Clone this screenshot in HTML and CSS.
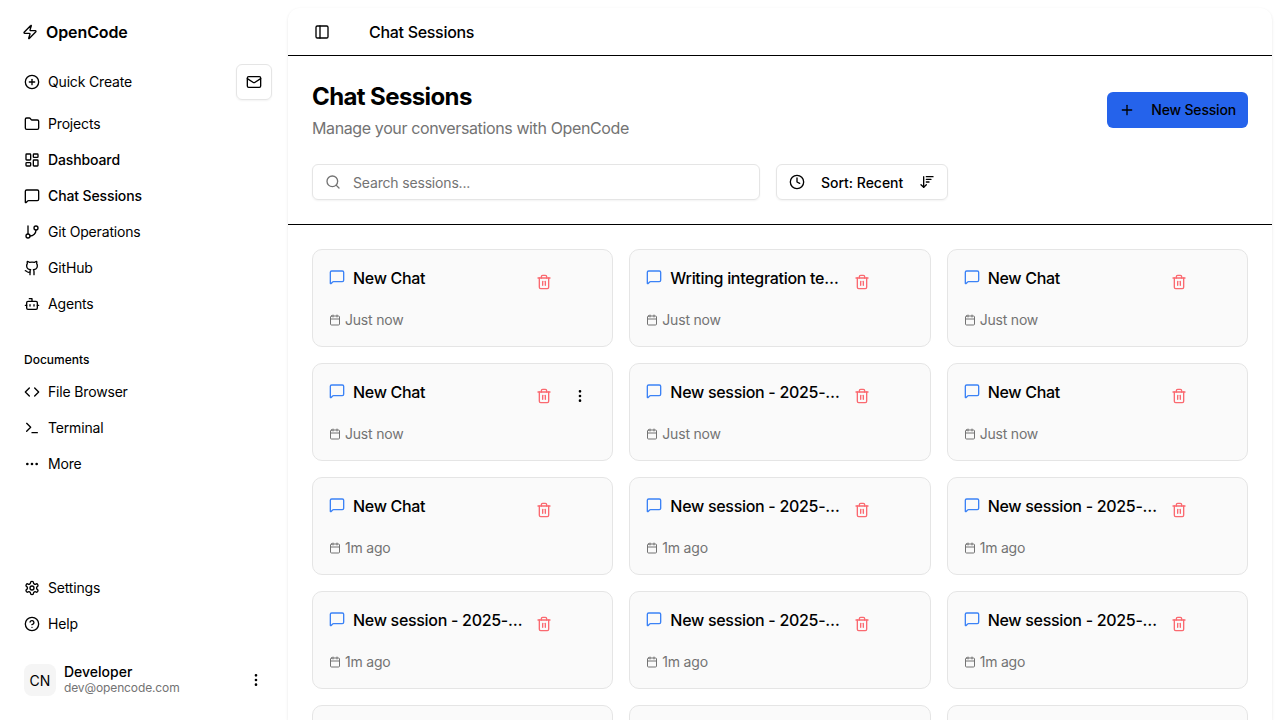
FILE: index.html
```html
<!DOCTYPE html>
<html lang="en">
<head>
    <meta charset="UTF-8">
    <meta name="viewport" content="width=device-width, initial-scale=1.0">
    <title>Chat Sessions - OpenCode</title>
    <link rel="stylesheet" href="styles.css">
</head>
<body>
    <svg class="sprite" xmlns="http://www.w3.org/2000/svg">
        <symbol id="i-zap" viewBox="0 0 24 24"><path d="M4 14a1 1 0 0 1-.78-1.63l9.9-10.2a.5.5 0 0 1 .86.46l-1.92 6.02A1 1 0 0 0 13 10h7a1 1 0 0 1 .78 1.63l-9.9 10.2a.5.5 0 0 1-.86-.46l1.92-6.02A1 1 0 0 0 11 14z"/></symbol>
        <symbol id="i-plus-circle" viewBox="0 0 24 24"><circle cx="12" cy="12" r="10"/><path d="M8 12h8"/><path d="M12 8v8"/></symbol>
        <symbol id="i-mail" viewBox="0 0 24 24"><rect x="2" y="4" width="20" height="16" rx="2"/><path d="m22 7-8.97 5.7a1.94 1.94 0 0 1-2.06 0L2 7"/></symbol>
        <symbol id="i-folder" viewBox="0 0 24 24"><path d="M20 20a2 2 0 0 0 2-2V8a2 2 0 0 0-2-2h-7.9a2 2 0 0 1-1.69-.9L9.6 3.9A2 2 0 0 0 7.93 3H4a2 2 0 0 0-2 2v13a2 2 0 0 0 2 2Z"/></symbol>
        <symbol id="i-dashboard" viewBox="0 0 24 24"><rect x="3" y="3" width="7" height="9" rx="1"/><rect x="14" y="3" width="7" height="5" rx="1"/><rect x="14" y="12" width="7" height="9" rx="1"/><rect x="3" y="16" width="7" height="5" rx="1"/></symbol>
        <symbol id="i-message" viewBox="0 0 24 24"><path d="M22 17a2 2 0 0 1-2 2H6.828a2 2 0 0 0-1.414.586l-2.202 2.202A.71.71 0 0 1 2 21.286V5a2 2 0 0 1 2-2h16a2 2 0 0 1 2 2z"/></symbol>
        <symbol id="i-git" viewBox="0 0 24 24"><path d="M6 3v12"/><circle cx="18" cy="6" r="3"/><circle cx="6" cy="18" r="3"/><path d="M18 9a9 9 0 0 1-9 9"/></symbol>
        <symbol id="i-github" viewBox="0 0 24 24"><path d="M15 22v-4a4.8 4.8 0 0 0-1-3.5c3 0 6-2 6-5.5.08-1.25-.27-2.48-1-3.5.28-1.15.28-2.35 0-3.5 0 0-1 0-3 1.5-2.64-.5-5.36-.5-8 0C6 2 5 2 5 2c-.3 1.15-.3 2.35 0 3.5A5.403 5.403 0 0 0 4 9c0 3.5 3 5.5 6 5.5-.39.49-.68 1.05-.85 1.65-.17.6-.22 1.23-.15 1.85v4"/><path d="M9 18c-4.51 2-5-2-7-2"/></symbol>
        <symbol id="i-bot" viewBox="0 0 24 24"><path d="M12 8V4H8"/><rect x="4" y="8" width="16" height="12" rx="2"/><path d="M2 14h2"/><path d="M20 14h2"/><path d="M15 13v2"/><path d="M9 13v2"/></symbol>
        <symbol id="i-code" viewBox="0 0 24 24"><path d="m16 18 6-6-6-6"/><path d="m8 6-6 6 6 6"/></symbol>
        <symbol id="i-terminal" viewBox="0 0 24 24"><path d="m4 17 6-6-6-6"/><path d="M12 19h8"/></symbol>
        <symbol id="i-more-h" viewBox="0 0 24 24"><circle cx="12" cy="12" r="1"/><circle cx="19" cy="12" r="1"/><circle cx="5" cy="12" r="1"/></symbol>
        <symbol id="i-more-v" viewBox="0 0 24 24"><circle cx="12" cy="12" r="1"/><circle cx="12" cy="5" r="1"/><circle cx="12" cy="19" r="1"/></symbol>
        <symbol id="i-settings" viewBox="0 0 24 24"><path d="M12.22 2h-.44a2 2 0 0 0-2 2v.18a2 2 0 0 1-1 1.73l-.43.25a2 2 0 0 1-2 0l-.15-.08a2 2 0 0 0-2.73.73l-.22.38a2 2 0 0 0 .73 2.73l.15.1a2 2 0 0 1 1 1.72v.51a2 2 0 0 1-1 1.74l-.15.09a2 2 0 0 0-.73 2.73l.22.38a2 2 0 0 0 2.73.73l.15-.08a2 2 0 0 1 2 0l.43.25a2 2 0 0 1 1 1.73V20a2 2 0 0 0 2 2h.44a2 2 0 0 0 2-2v-.18a2 2 0 0 1 1-1.73l.43-.25a2 2 0 0 1 2 0l.15.08a2 2 0 0 0 2.73-.73l.22-.39a2 2 0 0 0-.73-2.73l-.15-.08a2 2 0 0 1-1-1.74v-.5a2 2 0 0 1 1-1.74l.15-.09a2 2 0 0 0 .73-2.73l-.22-.38a2 2 0 0 0-2.73-.73l-.15.08a2 2 0 0 1-2 0l-.43-.25a2 2 0 0 1-1-1.73V4a2 2 0 0 0-2-2z"/><circle cx="12" cy="12" r="3"/></symbol>
        <symbol id="i-help" viewBox="0 0 24 24"><circle cx="12" cy="12" r="10"/><path d="M9.09 9a3 3 0 0 1 5.83 1c0 2-3 3-3 3"/><path d="M12 17h.01"/></symbol>
        <symbol id="i-panel" viewBox="0 0 24 24"><rect x="3" y="3" width="18" height="18" rx="2"/><path d="M9 3v18"/></symbol>
        <symbol id="i-search" viewBox="0 0 24 24"><path d="m21 21-4.34-4.34"/><circle cx="11" cy="11" r="8"/></symbol>
        <symbol id="i-clock" viewBox="0 0 24 24"><circle cx="12" cy="12" r="10"/><path d="M12 6v6l4 2"/></symbol>
        <symbol id="i-sort" viewBox="0 0 24 24"><path d="m3 16 4 4 4-4"/><path d="M7 20V4"/><path d="M11 4h10"/><path d="M11 8h7"/><path d="M11 12h4"/></symbol>
        <symbol id="i-plus" viewBox="0 0 24 24"><path d="M5 12h14"/><path d="M12 5v14"/></symbol>
        <symbol id="i-trash" viewBox="0 0 24 24"><path d="M3 6h18"/><path d="M19 6v14c0 1-1 2-2 2H7c-1 0-2-1-2-2V6"/><path d="M8 6V4c0-1 1-2 2-2h4c1 0 2 1 2 2v2"/><path d="M10 11v6"/><path d="M14 11v6"/></symbol>
        <symbol id="i-calendar" viewBox="0 0 24 24"><path d="M8 2v4"/><path d="M16 2v4"/><rect x="3" y="4" width="18" height="18" rx="2"/><path d="M3 10h18"/></symbol>
    </svg>

    <div class="app">
        <aside class="sidebar">
            <div class="brand">
                <svg class="icon"><use href="#i-zap"/></svg>
                <span>OpenCode</span>
            </div>

            <div class="quick-row">
                <a class="nav-item quick-link"><svg class="icon"><use href="#i-plus-circle"/></svg>Quick Create</a>
                <button class="mail-btn"><svg class="icon"><use href="#i-mail"/></svg></button>
            </div>

            <nav class="nav-list">
                <a class="nav-item"><svg class="icon"><use href="#i-folder"/></svg>Projects</a>
                <a class="nav-item strong"><svg class="icon"><use href="#i-dashboard"/></svg>Dashboard</a>
                <a class="nav-item strong"><svg class="icon"><use href="#i-message"/></svg>Chat Sessions</a>
                <a class="nav-item"><svg class="icon"><use href="#i-git"/></svg>Git Operations</a>
                <a class="nav-item"><svg class="icon"><use href="#i-github"/></svg>GitHub</a>
                <a class="nav-item"><svg class="icon"><use href="#i-bot"/></svg>Agents</a>
            </nav>

            <div class="nav-label">Documents</div>
            <nav class="nav-list">
                <a class="nav-item"><svg class="icon"><use href="#i-code"/></svg>File Browser</a>
                <a class="nav-item"><svg class="icon"><use href="#i-terminal"/></svg>Terminal</a>
                <a class="nav-item"><svg class="icon"><use href="#i-more-h"/></svg>More</a>
            </nav>

            <nav class="nav-list nav-bottom">
                <a class="nav-item"><svg class="icon"><use href="#i-settings"/></svg>Settings</a>
                <a class="nav-item"><svg class="icon"><use href="#i-help"/></svg>Help</a>
            </nav>

            <div class="user">
                <div class="avatar">CN</div>
                <div class="user-info">
                    <div class="user-name">Developer</div>
                    <div class="user-mail">dev@opencode.com</div>
                </div>
                <svg class="icon"><use href="#i-more-v"/></svg>
            </div>
        </aside>

        <main class="main">
            <header class="topbar">
                <button class="panel-btn"><svg class="icon"><use href="#i-panel"/></svg></button>
                <span class="topbar-title">Chat Sessions</span>
            </header>

            <section class="page-head">
                <div class="title-row">
                    <div>
                        <h1>Chat Sessions</h1>
                        <p>Manage your conversations with OpenCode</p>
                    </div>
                    <button class="new-btn"><svg class="icon"><use href="#i-plus"/></svg>New Session</button>
                </div>
                <div class="filter-row">
                    <label class="search">
                        <svg class="icon"><use href="#i-search"/></svg>
                        <input type="text" placeholder="Search sessions...">
                    </label>
                    <button class="sort-btn">
                        <svg class="icon"><use href="#i-clock"/></svg>
                        Sort: Recent
                        <svg class="icon"><use href="#i-sort"/></svg>
                    </button>
                </div>
            </section>

            <section class="grid">
                <article class="card">
                    <div class="card-top">
                        <svg class="icon chat-icon"><use href="#i-message"/></svg>
                        <h3>New Chat</h3>
                        <button class="card-btn delete"><svg class="icon"><use href="#i-trash"/></svg></button>
                        <button class="card-btn more"><svg class="icon"><use href="#i-more-v"/></svg></button>
                    </div>
                    <div class="card-date"><svg class="icon-sm"><use href="#i-calendar"/></svg>Just now</div>
                </article>
                <article class="card">
                    <div class="card-top">
                        <svg class="icon chat-icon"><use href="#i-message"/></svg>
                        <h3>Writing integration tests</h3>
                        <button class="card-btn delete"><svg class="icon"><use href="#i-trash"/></svg></button>
                        <button class="card-btn more"><svg class="icon"><use href="#i-more-v"/></svg></button>
                    </div>
                    <div class="card-date"><svg class="icon-sm"><use href="#i-calendar"/></svg>Just now</div>
                </article>
                <article class="card">
                    <div class="card-top">
                        <svg class="icon chat-icon"><use href="#i-message"/></svg>
                        <h3>New Chat</h3>
                        <button class="card-btn delete"><svg class="icon"><use href="#i-trash"/></svg></button>
                        <button class="card-btn more"><svg class="icon"><use href="#i-more-v"/></svg></button>
                    </div>
                    <div class="card-date"><svg class="icon-sm"><use href="#i-calendar"/></svg>Just now</div>
                </article>

                <article class="card hovered">
                    <div class="card-top">
                        <svg class="icon chat-icon"><use href="#i-message"/></svg>
                        <h3>New Chat</h3>
                        <button class="card-btn delete"><svg class="icon"><use href="#i-trash"/></svg></button>
                        <button class="card-btn more"><svg class="icon"><use href="#i-more-v"/></svg></button>
                    </div>
                    <div class="card-date"><svg class="icon-sm"><use href="#i-calendar"/></svg>Just now</div>
                </article>
                <article class="card">
                    <div class="card-top">
                        <svg class="icon chat-icon"><use href="#i-message"/></svg>
                        <h3>New session - 2025-06-14</h3>
                        <button class="card-btn delete"><svg class="icon"><use href="#i-trash"/></svg></button>
                        <button class="card-btn more"><svg class="icon"><use href="#i-more-v"/></svg></button>
                    </div>
                    <div class="card-date"><svg class="icon-sm"><use href="#i-calendar"/></svg>Just now</div>
                </article>
                <article class="card">
                    <div class="card-top">
                        <svg class="icon chat-icon"><use href="#i-message"/></svg>
                        <h3>New Chat</h3>
                        <button class="card-btn delete"><svg class="icon"><use href="#i-trash"/></svg></button>
                        <button class="card-btn more"><svg class="icon"><use href="#i-more-v"/></svg></button>
                    </div>
                    <div class="card-date"><svg class="icon-sm"><use href="#i-calendar"/></svg>Just now</div>
                </article>

                <article class="card">
                    <div class="card-top">
                        <svg class="icon chat-icon"><use href="#i-message"/></svg>
                        <h3>New Chat</h3>
                        <button class="card-btn delete"><svg class="icon"><use href="#i-trash"/></svg></button>
                        <button class="card-btn more"><svg class="icon"><use href="#i-more-v"/></svg></button>
                    </div>
                    <div class="card-date"><svg class="icon-sm"><use href="#i-calendar"/></svg>1m ago</div>
                </article>
                <article class="card">
                    <div class="card-top">
                        <svg class="icon chat-icon"><use href="#i-message"/></svg>
                        <h3>New session - 2025-06-14</h3>
                        <button class="card-btn delete"><svg class="icon"><use href="#i-trash"/></svg></button>
                        <button class="card-btn more"><svg class="icon"><use href="#i-more-v"/></svg></button>
                    </div>
                    <div class="card-date"><svg class="icon-sm"><use href="#i-calendar"/></svg>1m ago</div>
                </article>
                <article class="card">
                    <div class="card-top">
                        <svg class="icon chat-icon"><use href="#i-message"/></svg>
                        <h3>New session - 2025-06-14</h3>
                        <button class="card-btn delete"><svg class="icon"><use href="#i-trash"/></svg></button>
                        <button class="card-btn more"><svg class="icon"><use href="#i-more-v"/></svg></button>
                    </div>
                    <div class="card-date"><svg class="icon-sm"><use href="#i-calendar"/></svg>1m ago</div>
                </article>

                <article class="card">
                    <div class="card-top">
                        <svg class="icon chat-icon"><use href="#i-message"/></svg>
                        <h3>New session - 2025-06-14</h3>
                        <button class="card-btn delete"><svg class="icon"><use href="#i-trash"/></svg></button>
                        <button class="card-btn more"><svg class="icon"><use href="#i-more-v"/></svg></button>
                    </div>
                    <div class="card-date"><svg class="icon-sm"><use href="#i-calendar"/></svg>1m ago</div>
                </article>
                <article class="card">
                    <div class="card-top">
                        <svg class="icon chat-icon"><use href="#i-message"/></svg>
                        <h3>New session - 2025-06-14</h3>
                        <button class="card-btn delete"><svg class="icon"><use href="#i-trash"/></svg></button>
                        <button class="card-btn more"><svg class="icon"><use href="#i-more-v"/></svg></button>
                    </div>
                    <div class="card-date"><svg class="icon-sm"><use href="#i-calendar"/></svg>1m ago</div>
                </article>
                <article class="card">
                    <div class="card-top">
                        <svg class="icon chat-icon"><use href="#i-message"/></svg>
                        <h3>New session - 2025-06-14</h3>
                        <button class="card-btn delete"><svg class="icon"><use href="#i-trash"/></svg></button>
                        <button class="card-btn more"><svg class="icon"><use href="#i-more-v"/></svg></button>
                    </div>
                    <div class="card-date"><svg class="icon-sm"><use href="#i-calendar"/></svg>1m ago</div>
                </article>

                <article class="card"></article>
                <article class="card"></article>
                <article class="card"></article>
            </section>
        </main>
    </div>
</body>
</html>
```

FILE: styles.css
```css
:root {
    --text-color: #000;
    --muted-color: #737373;
    --border-color: #e5e5e5;
    --primary-color: #2563eb;
    --card-color: #fafafa;
}

* {
    margin: 0;
    padding: 0;
    box-sizing: border-box;
}

body {
    font-family: 'Inter', 'Liberation Sans', sans-serif;
    background-color: #fff;
    color: var(--text-color);
    height: 100vh;
    overflow: hidden;
}

button {
    font: inherit;
    color: inherit;
    background: none;
    border: none;
}

.sprite {
    display: none;
}

.icon,
.icon-sm {
    flex: none;
    width: 16px;
    height: 16px;
    fill: none;
    stroke: currentColor;
    stroke-width: 2;
    stroke-linecap: round;
    stroke-linejoin: round;
}

.icon-sm {
    width: 12px;
    height: 12px;
}

.app {
    display: flex;
    height: 100vh;
}

/* sidebar */

.sidebar {
    display: flex;
    flex-direction: column;
    flex: none;
    width: 288px;
    height: 720px;
    padding: 16px 16px 24px;
}

.brand {
    display: flex;
    align-items: center;
    gap: 8px;
    height: 32px;
    padding-left: 6px;
    margin-bottom: 16px;
    font-size: 16px;
    font-weight: 600;
    letter-spacing: -0.1px;
}

.quick-row {
    display: flex;
    align-items: center;
    justify-content: space-between;
    height: 36px;
    margin-bottom: 8px;
}

.nav-list {
    display: flex;
    flex-direction: column;
    gap: 4px;
}

.nav-item {
    display: flex;
    align-items: center;
    gap: 8px;
    height: 32px;
    padding: 0 8px;
    font-size: 14px;
    line-height: 20px;
    letter-spacing: -0.17px;
}

.nav-item.strong {
    font-weight: 500;
    letter-spacing: -0.12px;
}

.mail-btn {
    display: flex;
    align-items: center;
    justify-content: center;
    width: 36px;
    height: 36px;
    border: 1px solid var(--border-color);
    border-radius: 6px;
    box-shadow: 0 1px 2px rgba(0, 0, 0, 0.05);
}

.nav-label {
    margin-top: 23px;
    height: 33px;
    padding: 0 8px;
    font-size: 12px;
    font-weight: 500;
    line-height: 33px;
}

.nav-bottom {
    margin-top: auto;
}

.user {
    display: flex;
    align-items: center;
    gap: 8px;
    margin-top: 24px;
    padding: 0 8px;
}

.avatar {
    display: flex;
    align-items: center;
    justify-content: center;
    flex: none;
    width: 32px;
    height: 32px;
    border-radius: 8px;
    background-color: #f5f5f5;
    font-size: 14px;
}

.user-info {
    flex: 1;
    min-width: 0;
}

.user-name {
    font-size: 14px;
    font-weight: 500;
    line-height: 16px;
}

.user-mail {
    font-size: 12px;
    line-height: 16px;
    letter-spacing: -0.12px;
    color: var(--muted-color);
}

/* main panel */

.main {
    flex: 1;
    min-width: 0;
    margin: 8px 8px 0 0;
    border-radius: 12px 12px 0 0;
    background-color: #fff;
    box-shadow: 0 1px 3px rgba(0, 0, 0, 0.1);
}

.topbar {
    display: flex;
    align-items: center;
    gap: 33px;
    height: 48px;
    padding: 0 20px;
    border-bottom: 1px solid #000;
}

.panel-btn {
    display: flex;
    align-items: center;
    justify-content: center;
    width: 28px;
    height: 28px;
}

.topbar-title {
    font-size: 16px;
    font-weight: 500;
    letter-spacing: -0.3px;
}

.page-head {
    padding: 24px;
    border-bottom: 1px solid #000;
}

.title-row {
    display: flex;
    align-items: center;
    justify-content: space-between;
    margin-bottom: 24px;
}

h1 {
    padding-top: 1px;
    font-size: 24px;
    font-weight: 700;
    line-height: 32px;
    letter-spacing: -0.6px;
    margin-bottom: 3px;
}

.title-row p {
    font-size: 16px;
    line-height: 24px;
    letter-spacing: -0.38px;
    color: var(--muted-color);
}

.new-btn {
    display: flex;
    align-items: center;
    gap: 16px;
    height: 36px;
    padding: 0 12px;
    border-radius: 6px;
    background-color: var(--primary-color);
    font-size: 14px;
    font-weight: 500;
    line-height: 20px;
    letter-spacing: -0.18px;
}

.filter-row {
    display: flex;
    gap: 16px;
}

.search {
    display: flex;
    align-items: center;
    gap: 12px;
    width: 448px;
    height: 36px;
    padding: 0 12px;
    border: 1px solid var(--border-color);
    border-radius: 6px;
    box-shadow: 0 1px 2px rgba(0, 0, 0, 0.05);
    color: var(--muted-color);
}

.search input {
    flex: 1;
    min-width: 0;
    border: none;
    outline: none;
    background: none;
    font: inherit;
    font-size: 14px;
    letter-spacing: -0.17px;
}

.search input::placeholder {
    color: var(--muted-color);
}

.sort-btn {
    display: flex;
    align-items: center;
    gap: 16px;
    height: 36px;
    padding: 0 12px;
    border: 1px solid var(--border-color);
    border-radius: 6px;
    box-shadow: 0 1px 2px rgba(0, 0, 0, 0.05);
    font-size: 14px;
    font-weight: 500;
    letter-spacing: -0.02px;
}

/* session cards */

.grid {
    display: grid;
    grid-template-columns: repeat(3, minmax(0, 1fr));
    gap: 16px;
    padding: 24px;
}

.card {
    height: 98px;
    padding: 16px;
    border: 1px solid var(--border-color);
    border-radius: 10px;
    background-color: var(--card-color);
}

.card-top {
    display: flex;
    align-items: flex-start;
    gap: 8px;
    height: 32px;
    margin-bottom: 12px;
}

.chat-icon {
    margin-top: 3px;
    color: #3b82f6;
}

h3 {
    flex: 1;
    min-width: 0;
    margin-right: -3px;
    font-size: 16px;
    font-weight: 500;
    line-height: 24px;
    letter-spacing: -0.3px;
    white-space: nowrap;
    overflow: hidden;
    text-overflow: ellipsis;
}

.card-btn {
    display: flex;
    align-items: center;
    justify-content: center;
    flex: none;
    width: 32px;
    height: 32px;
}

.delete {
    color: #fb2c36;
}

.delete .icon {
    opacity: 0.7;
}

.more {
    margin-left: -4px;
    visibility: hidden;
}

.hovered .more {
    visibility: visible;
}

.card-date {
    display: flex;
    align-items: center;
    gap: 4px;
    font-size: 14px;
    line-height: 20px;
    letter-spacing: -0.2px;
    color: var(--muted-color);
}
```
